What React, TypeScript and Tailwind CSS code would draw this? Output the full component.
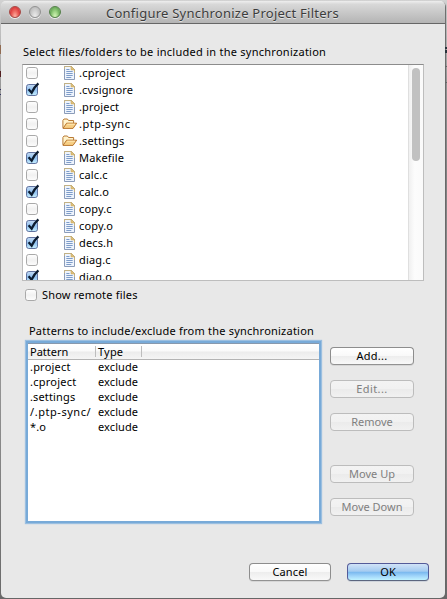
import React from "react";

type FileEntry = { name: string; checked?: boolean; folder?: boolean; tracking?: string };

const files: FileEntry[] = [
  { name: ".cproject", tracking: "tracking-[0.25px]" },
  { name: ".cvsignore", checked: true },
  { name: ".project" },
  { name: ".ptp-sync", folder: true, tracking: "tracking-[0.5px]" },
  { name: ".settings", folder: true },
  { name: "Makefile", checked: true },
  { name: "calc.c" },
  { name: "calc.o", checked: true },
  { name: "copy.c" },
  { name: "copy.o", checked: true },
  { name: "decs.h", checked: true },
  { name: "diag.c" },
  { name: "diag.o", checked: true },
];

const patterns = [
  { name: ".project", tracking: "tracking-[0.2px]" },
  { name: ".cproject", tracking: "tracking-[0.25px]" },
  { name: ".settings", tracking: "tracking-[0.15px]" },
  { name: "/.ptp-sync/", tracking: "tracking-[0.55px]" },
  { name: "*.o", tracking: "tracking-[0.1px]" },
];

function Checkbox({ checked = false }: { checked?: boolean }) {
  return (
    <svg width="14" height="15" viewBox="0 0 14 15" className="block shrink-0">
      <defs>
        <linearGradient id="boxOff" x1="0" y1="0" x2="0" y2="1">
          <stop offset="0" stopColor="#ffffff" />
          <stop offset="0.5" stopColor="#f1f1f1" />
          <stop offset="1" stopColor="#fdfdfd" />
        </linearGradient>
        <linearGradient id="boxOn" x1="0" y1="0" x2="0" y2="1">
          <stop offset="0" stopColor="#c6dcf4" />
          <stop offset="0.5" stopColor="#8fc0f0" />
          <stop offset="1" stopColor="#c8f0ff" />
        </linearGradient>
      </defs>
      <rect x="0.5" y="2.5" width="11" height="11" rx="2.3" fill={checked ? "url(#boxOn)" : "url(#boxOff)"} stroke={checked ? "#60729f" : "#a9a9a9"} />
      {checked && <path d="M2.6 7.3 5.6 10.7Q7.8 5.5 12.4 1.4" fill="none" stroke="#0c1c30" strokeWidth="2.3" />}
    </svg>
  );
}

function FileIcon() {
  return (
    <svg width="12" height="14" viewBox="0 0 12 14" className="block">
      <path d="M.5.5h7l3 3v10H.5z" fill="#eef4fd" stroke="#8b9cb9" />
      <path d="M.5 3V.5h7l3 3V7" fill="none" stroke="#c3b183" />
      <path d="M7 .5v3.4h3.5z" fill="#e2c27b" stroke="#c9a75d" strokeWidth=".6" />
      <path d="M2.3 3.5h3.2M2.3 5.5h6.4M2.3 7.5h6.4M2.3 9.5h6.4M2.3 11.5h5" stroke="#7d9cc9" strokeWidth="1" />
    </svg>
  );
}

function FolderIcon() {
  return (
    <svg width="16" height="14" viewBox="0 0 16 14" className="block">
      <path d="M.9 10.9V3.4L2 2h3.4l1.1 1.5h5.1v2.7" fill="#fff3cc" stroke="#b97a35" />
      <path d="M1 11.4 4.6 6.2h10.1L11 11.4z" fill="#f7cf85" stroke="#b9752d" strokeLinejoin="round" />
      <path d="M5.2 7.2h7.9" stroke="#ffebb7" />
    </svg>
  );
}

function PushButton({ label, kind = "disabled", className }: { label: string; kind?: "normal" | "disabled" | "primary"; className: string }) {
  const look = {
    normal: "border-[#8d8d8d] border-b-[#929292] bg-[linear-gradient(#fff,#f9f9f9_48%,#ededed_52%,#f9f9f9)] text-black shadow-[0_1px_0_#d6d6d6]",
    disabled: "border-[#bcbcbc] bg-[linear-gradient(#f3f3f3,#f1f1f1_48%,#ebebeb_52%,#f1f1f1)] text-[#7f7f7f]",
    primary: "border-[#545b99] border-b-[#5c667f] bg-[linear-gradient(#d1e3f7,#a3cbf1_46%,#78b7ee_50%,#a0d5fa_75%,#c0f3ff)] text-black shadow-[0_1px_0_#cfd4db]",
  }[kind];
  return (
    <button className={`flex h-[18px] shrink-0 items-center justify-center rounded-[4px] border pb-[1px] leading-[15px] whitespace-nowrap ${look} ${className}`}>
      {label}
    </button>
  );
}

export default function App() {
  return (
    <div className="flex h-[599px] w-[447px] overflow-hidden bg-[linear-gradient(#d2d2d2,#b5b5b5_8%,#999_14%,#858585_30%,#999_60%,#696969)] font-['Noto_Sans','Open_Sans',sans-serif] text-[11px] leading-[15px] text-black">
      <div className="w-px shrink-0 bg-[linear-gradient(transparent_45px,#906b52_45px,#906b52_54px,transparent_54px,transparent_71px,#521f20_71px,#521f20_77px,transparent_77px,transparent_89px,#34345f_89px,#34345f_90px,transparent_90px,transparent_94px,#34345f_94px,#34345f_95px,transparent_95px)]" />
      <div className="mt-px flex h-[597px] w-[444px] shrink-0 flex-col rounded-[5px] bg-[#e8e8e8] shadow-[1px_1px_1px_#666]">
        <header className="flex h-[23px] shrink-0 items-center rounded-t-[5px] border-b border-[#666] bg-[linear-gradient(#eee,#d8d8d8_15%,#b4b4b4)]">
          <div className="flex w-[105px] shrink-0 gap-[8px] pl-[8px]">
            <span className="size-3 rounded-full border border-[#a64844] bg-[radial-gradient(ellipse_at_50%_95%,#ffb7a9,#ee6a62_40%,#dc3e3f_70%,#f0a6a2)] shadow-[0_1px_0_#eee]" />
            <span className="size-3 rounded-full border border-[#929292] bg-[radial-gradient(ellipse_at_50%_95%,#eee,#d1d1d1_45%,#bcbcbc_75%,#ddd)] shadow-[0_1px_0_#eee]" />
            <span className="size-3 rounded-full border border-[#547f49] bg-[radial-gradient(ellipse_at_50%_95%,#d7f7ba,#9bd183_40%,#6cac5b_70%,#c0e0b6)] shadow-[0_1px_0_#eee]" />
          </div>
          <h1 className="pt-[2px] text-[13px] leading-[18px] tracking-[0.24px] whitespace-nowrap text-[#3c3c3c] [text-shadow:0_1px_0_#e4e4e4]">Configure Synchronize Project Filters</h1>
        </header>

        <main className="flex min-h-0 grow flex-col">
          <p className="mt-[20px] ml-[22px] h-[15px] shrink-0 tracking-[0.26px] whitespace-nowrap">Select files/folders to be included in the synchronization</p>
          <section className="mt-[5px] ml-[21px] flex h-[217px] w-[402px] shrink-0 overflow-hidden border border-[#bdbdbd] border-t-[#8c8c8c] bg-white">
            <ul className="grow">
              {files.map((file) => (
                <li key={file.name} className="flex h-[17px] pl-[3px]">
                  <Checkbox checked={file.checked} />
                  <span className={`flex w-[39px] pt-[1px] ${file.folder ? "pl-[22px]" : "pl-[24px]"}`}>
                    {file.folder ? <FolderIcon /> : <FileIcon />}
                  </span>
                  <span className={`leading-[16px] whitespace-nowrap ${file.tracking ?? "tracking-[0.15px]"}`}>{file.name}</span>
                </li>
              ))}
            </ul>
            <div className="w-[15px] border-l border-[#dfdfdf] bg-[linear-gradient(90deg,#f0f0f0,#fcfcfc_40%,#fafafa)] pt-[3px] pl-[3px]">
              <div className="h-[93px] w-[8px] rounded-full bg-[#c1c1c1]" />
            </div>
          </section>

          <label className="mt-[6px] ml-[24px] flex h-[15px] shrink-0 gap-[3px]">
            <Checkbox />
            <span className="leading-[16px] tracking-[0.2px]">Show remote files</span>
          </label>

          <p className="mt-[21px] ml-[28px] h-[15px] shrink-0 tracking-[0.22px] whitespace-nowrap">Patterns to include/exclude from the synchronization</p>
          <div className="mt-[5px] ml-[27px] flex h-[178px] shrink-0">
            <section className="flex w-[291px] shrink-0 flex-col border-t border-[#8798ac] bg-white shadow-[0_0_0_2px_#78aad8,0_0_1px_3px_#9bbfe0]">
              <div className="flex h-[16px] shrink-0 items-center border-b border-[#b4b4b4] bg-[linear-gradient(#fff,#fafafa_48%,#ececec_52%,#f5f5f5)]">
                <span className="w-[68px] border-r border-[#bdbdbd] pl-[2px] leading-[11px]">Pattern</span>
                <span className="w-[46px] border-r border-[#bdbdbd] pl-[2px] leading-[11px] tracking-[0.2px]">Type</span>
              </div>
              {patterns.map((pattern) => (
                <div key={pattern.name} className="flex h-[15px] shrink-0 leading-[13px]">
                  <span className={`w-[70px] pl-[2px] whitespace-nowrap ${pattern.tracking}`}>{pattern.name}</span>
                  <span className="tracking-[0.1px]">exclude</span>
                </div>
              ))}
            </section>
            <div className="ml-[11px] flex flex-col pt-[4px]">
              <PushButton label="Add..." kind="normal" className="w-[84px] tracking-[0.25px]" />
              <PushButton label="Edit..." className="mt-[15px] w-[84px] tracking-[0.4px]" />
              <PushButton label="Remove" className="mt-[15px] w-[84px]" />
              <PushButton label="Move Up" className="mt-[34px] w-[84px]" />
              <PushButton label="Move Down" className="mt-[15px] w-[84px]" />
            </div>
          </div>
          <footer className="mt-[42px] mr-[16px] flex shrink-0 justify-end gap-[16px]">
            <PushButton label="Cancel" kind="normal" className="w-[82px] tracking-[0.15px]" />
            <PushButton label="OK" kind="primary" className="w-[82px]" />
          </footer>
        </main>
      </div>
      <div className="w-[2px] shrink-0 bg-[linear-gradient(transparent_47px,#29343c_47px,#29343c_49px,transparent_49px,transparent_50px,#29343c_50px,#29343c_53px,transparent_53px,transparent_66px,#666_66px,#666_67px,transparent_67px,transparent_82px,#666_82px,#666_83px,transparent_83px)]" />
    </div>
  );
}
